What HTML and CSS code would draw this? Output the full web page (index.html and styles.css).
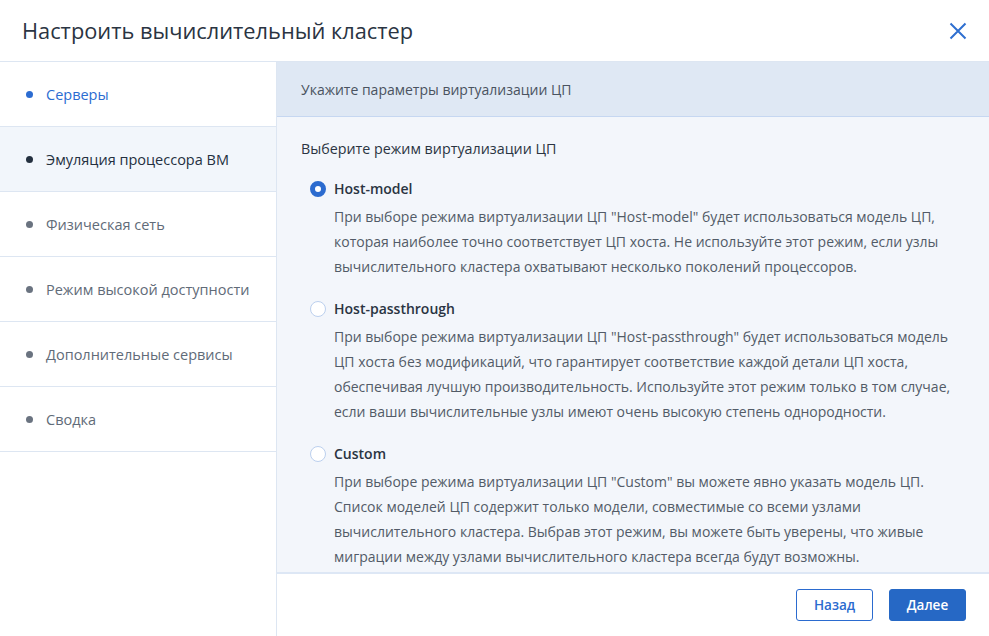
FILE: index.html
```html
<!DOCTYPE html>
<html lang="ru">
  <head>
    <meta charset="UTF-8" />
    <meta name="viewport" content="width=device-width, initial-scale=1.0" />
    <title>Настроить вычислительный кластер</title>
    <link rel="stylesheet" href="styles.css">
  </head>
  <body>
    <div class="wizard">
      <div class="wizard-header">
        <h1>Настроить вычислительный кластер</h1>
        <button class="close-btn" type="button" aria-label="Закрыть">
          <svg width="18" height="18" viewBox="0 0 18 18">
            <path d="M1.5 1.5 L16.5 16.5 M16.5 1.5 L1.5 16.5" stroke="#2f6fd0" stroke-width="2" fill="none" />
          </svg>
        </button>
      </div>

      <div class="wizard-body">
        <ul class="steps">
          <li class="step done">Серверы</li>
          <li class="step current">Эмуляция процессора ВМ</li>
          <li class="step">Физическая сеть</li>
          <li class="step">Режим высокой доступности</li>
          <li class="step">Дополнительные сервисы</li>
          <li class="step">Сводка</li>
        </ul>

        <div class="panel">
          <div class="panel-title">Укажите параметры виртуализации ЦП</div>

          <div class="panel-content">
            <div class="group-label">Выберите режим виртуализации ЦП</div>

            <label class="option">
              <input type="radio" name="cpuMode" value="host-model" checked />
              <span class="radio"></span>
              <span class="option-text">
                <span class="option-name">Host-model</span>
                <span class="option-desc">При выборе режима виртуализации ЦП "Host-model" будет использоваться модель ЦП, которая наиболее точно соответствует ЦП хоста. Не используйте этот режим, если узлы вычислительного кластера охватывают несколько поколений процессоров.</span>
              </span>
            </label>

            <label class="option">
              <input type="radio" name="cpuMode" value="host-passthrough" />
              <span class="radio"></span>
              <span class="option-text">
                <span class="option-name">Host-passthrough</span>
                <span class="option-desc">При выборе режима виртуализации ЦП "Host-passthrough" будет использоваться модель ЦП хоста без модификаций, что гарантирует соответствие каждой детали ЦП хоста, обеспечивая лучшую производительность. Используйте этот режим только в том случае, если ваши вычислительные узлы имеют очень высокую степень однородности.</span>
              </span>
            </label>

            <label class="option">
              <input type="radio" name="cpuMode" value="custom" />
              <span class="radio"></span>
              <span class="option-text">
                <span class="option-name">Custom</span>
                <span class="option-desc">При выборе режима виртуализации ЦП "Custom" вы можете явно указать модель ЦП. Список моделей ЦП содержит только модели, совместимые со всеми узлами вычислительного кластера. Выбрав этот режим, вы можете быть уверены, что живые миграции между узлами вычислительного кластера всегда будут возможны.</span>
              </span>
            </label>
          </div>

          <div class="panel-footer">
            <button class="btn btn-secondary" type="button">Назад</button>
            <button class="btn btn-primary" type="button">Далее</button>
          </div>
        </div>
      </div>
    </div>
  </body>
</html>
```

FILE: styles.css
```css
* {
  box-sizing: border-box;
}
html,
body {
  height: 100%;
}
body {
  margin: 0;
  font-family: "Open Sans", "Noto Sans", sans-serif;
  color: #24303f;
  background: #fff;
}
.wizard {
  display: flex;
  flex-direction: column;
  height: 100%;
}
.wizard-header {
  height: 62px;
  flex: none;
  display: flex;
  align-items: center;
  justify-content: space-between;
  padding: 0 18px 0 22px;
  border-bottom: 1px solid #dde6f2;
}
.wizard-header h1 {
  margin: 0;
  font-size: 21.8px;
  font-weight: 400;
  color: #2a3442;
}
.close-btn {
  background: none;
  border: none;
  padding: 4px;
  cursor: pointer;
  display: flex;
}
.wizard-body {
  flex: 1;
  display: flex;
  min-height: 0;
}
.steps {
  list-style: none;
  margin: 0;
  padding: 0;
  width: 277px;
  flex: none;
  border-right: 1px solid #dde6f2;
}
.step {
  height: 65px;
  display: flex;
  align-items: center;
  padding-left: 26px;
  font-size: 14.5px;
  color: #616b78;
  border-bottom: 1px solid #dde6f2;
}
.step::before {
  content: "";
  width: 7px;
  height: 7px;
  border-radius: 50%;
  background: #6a7380;
  margin-right: 13px;
}
.step.done {
  color: #2c6cd1;
  background: #fff;
}
.step.done::before {
  background: #2c6cd1;
}
.step.current {
  color: #24303f;
  background: #f2f6fb;
}
.step.current::before {
  background: #24303f;
}
.panel {
  flex: 1;
  display: flex;
  flex-direction: column;
  min-width: 0;
}
.panel-title {
  height: 55px;
  flex: none;
  display: flex;
  align-items: center;
  padding-left: 24px;
  font-size: 14px;
  color: #4a5360;
  background: #dfe8f4;
  border-bottom: 1px solid #c6d7f1;
}
.panel-content {
  flex: 1;
  overflow: hidden;
  background: #f3f6fb;
  padding: 22px 24px 0 24px;
  border-bottom: 2px solid #dde7f5;
}
.group-label {
  font-size: 14.3px;
  font-weight: 500;
  color: #2a3442;
  margin-bottom: 21px;
}
.option {
  display: flex;
  align-items: flex-start;
  padding-left: 9px;
  margin-bottom: 20px;
  cursor: pointer;
}
.option input {
  display: none;
}
.radio {
  width: 16px;
  height: 16px;
  flex: none;
  border-radius: 50%;
  background: #fff;
  border: 1px solid #bcd0ee;
  margin-top: 2px;
  margin-right: 8px;
}
.option input:checked + .radio {
  border: 5px solid #2b6bcf;
  background: #fff;
}
.option-text {
  display: flex;
  flex-direction: column;
}
.option-name {
  font-size: 14px;
  font-weight: 600;
  color: #2a3442;
  line-height: 20px;
  margin-bottom: 5px;
}
.option-desc {
  font-size: 14px;
  line-height: 25px;
  color: #525b67;
}
.panel-footer {
  height: 62px;
  flex: none;
  display: flex;
  align-items: center;
  justify-content: flex-end;
  gap: 16px;
  padding-right: 23px;
  background: #fff;
}
.btn {
  height: 32px;
  min-width: 77px;
  padding: 0 16px;
  font-family: inherit;
  font-size: 13.5px;
  font-weight: 600;
  border-radius: 3px;
  cursor: pointer;
}
.btn-secondary {
  background: #fff;
  color: #2b6bcf;
  border: 1px solid #2b6bcf;
}
.btn-primary {
  background: #2668c5;
  color: #fff;
  border: 1px solid #2668c5;
}
```
